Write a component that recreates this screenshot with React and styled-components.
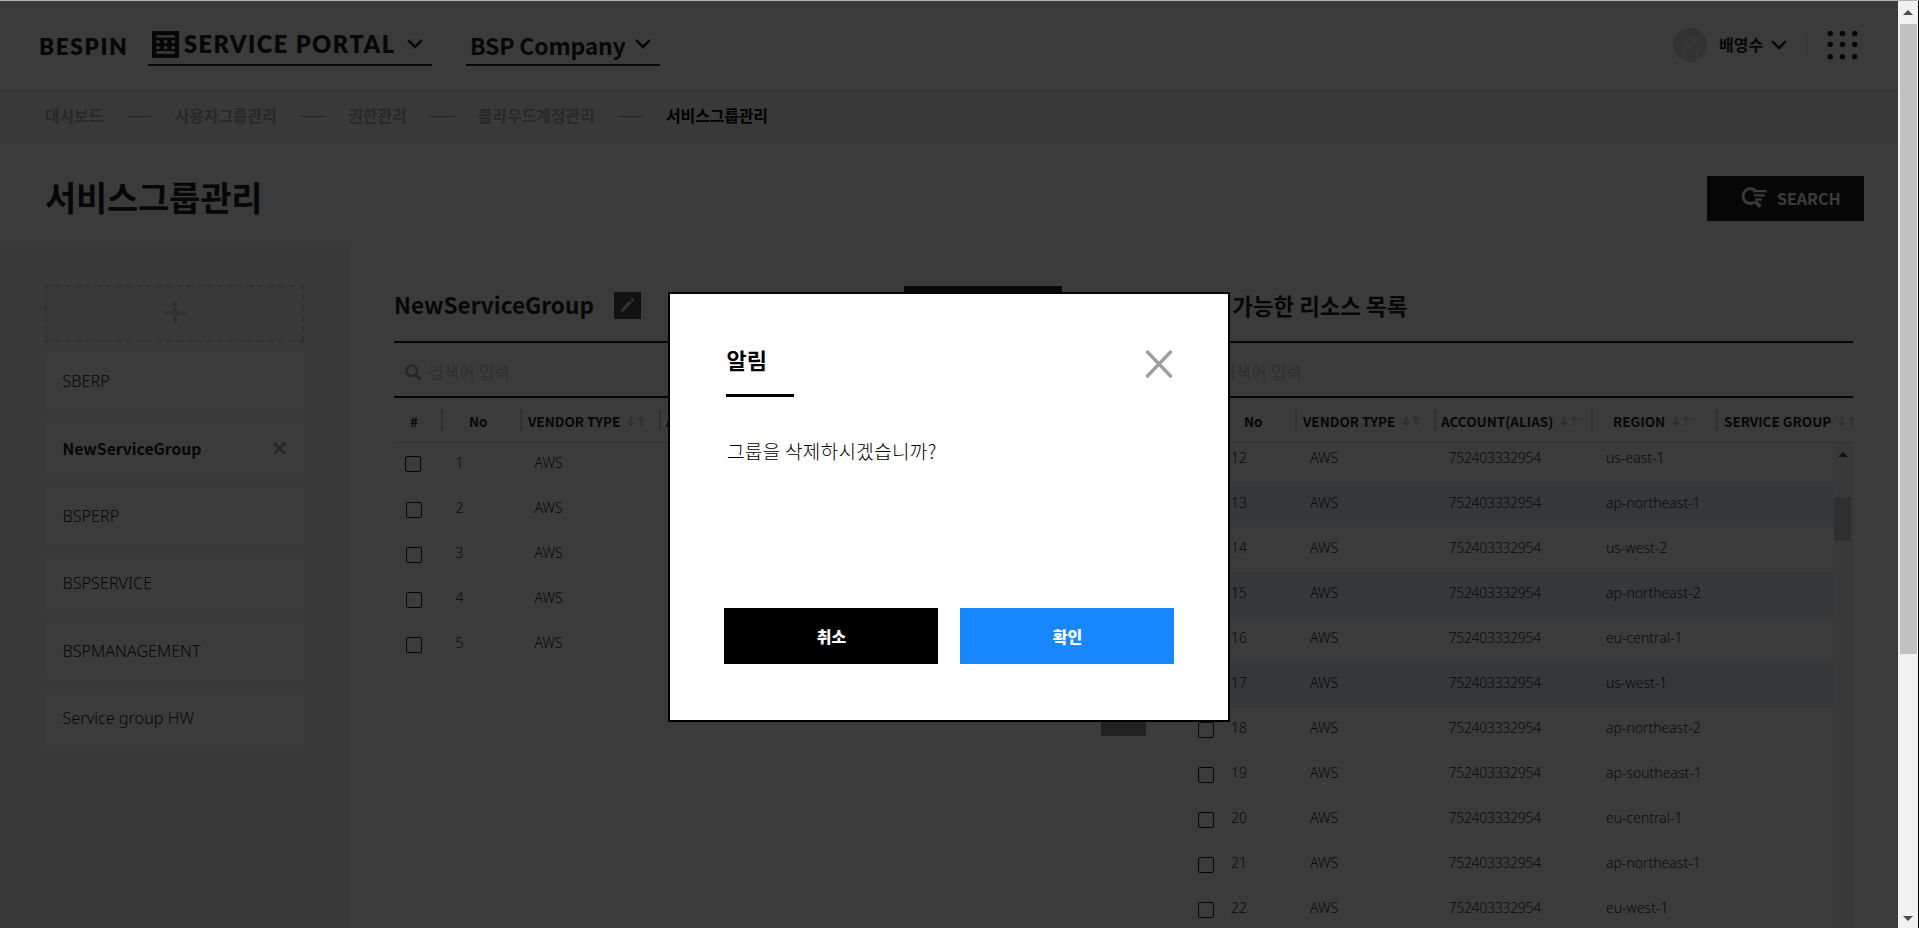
import React from "react";
import styled, { createGlobalStyle } from "styled-components";

const Global = createGlobalStyle`
  * { box-sizing: border-box; }
  html, body { margin: 0; padding: 0; background: #fff; }
  body { font-family: "Noto Sans CJK KR", "Noto Sans", sans-serif; color: #1e1e1e; }
  button { font: inherit; border: 0; padding: 0; margin: 0; }
`;

const sans = `"Noto Sans", "Noto Sans CJK KR", sans-serif`;

const Window = styled.div`
  position: relative;
  width: 1919px;
  height: 928px;
  overflow: hidden;
  display: grid;
  grid-template-columns: 1898px 21px;
  grid-template-rows: 1px 927px;
`;
const TopEdge = styled.div`
  grid-column: 1 / 3;
  background: #b4b4b4;
`;
const Page = styled.div`
  position: relative;
  display: flex;
  flex-direction: column;
  overflow: hidden;
  background: #fff;
`;

/* header */
const Header = styled.header`
  display: flex;
  align-items: flex-start;
  height: 90px;
  flex: none;
  border-bottom: 1px solid #d0d0d0;
  padding: 0 40px 0 39px;
`;
const Brand = styled.div`
  font: 800 22.5px/30px Lato, sans-serif;
  letter-spacing: 1.7px;
  padding-top: 31px;
  width: 109px;
  white-space: nowrap;
`;
const Picker = styled.div`
  display: flex;
  align-items: center;
  height: 65px;
  width: ${(p) => p.$w}px;
  margin-right: 34px;
  padding: ${(p) => p.$pad};
  border-bottom: 2px solid #1e1e1e;
  white-space: nowrap;
`;
const PortalName = styled.span`
  font: 800 23.5px/30px Lato, sans-serif;
  letter-spacing: 1.5px;
  width: 223px;
  margin-left: 5px;
`;
const CompanyName = styled.span`
  font: 700 23px/30px "Noto Sans CJK KR", sans-serif;
  letter-spacing: -0.2px;
  width: 165px;
  margin-top: 2px;
`;
const HeaderRight = styled.div`
  display: flex;
  align-items: center;
  margin-left: auto;
  height: 88px;
`;
const UserName = styled.span`
  font-size: 16px;
  font-weight: 700;
  line-height: 24px;
  width: 52px;
  margin: -2px 0 0 12px;
`;
const Divider = styled.i`
  width: 1px;
  height: 22px;
  background: #d0d0d0;
  margin: 0 20px 0 19px;
`;

/* breadcrumb */
const Crumbs = styled.nav`
  display: flex;
  align-items: center;
  flex: none;
  height: 53px;
  padding: 0 0 5px 45px;
  background: #f4f4f4;
  font-size: 16px;
  letter-spacing: -0.17px;
`;
const Crumb = styled.span`
  font-weight: 700;
  line-height: 24px;
  white-space: nowrap;
  color: ${(p) => (p.$on ? "#000" : "#b0b0b0")};
`;
const Dash = styled.i`
  width: 24.6px;
  height: 1px;
  margin: 2px 23.5px 0 23.500px;
  background: #9c9c9c;
`;

/* title */
const TitleBar = styled.div`
  display: flex;
  flex: none;
  justify-content: space-between;
  align-items: flex-start;
  height: 102px;
  padding: 32px 34px 0 45px;
  border-bottom: 1px solid #f6f6f6;
`;
const Title = styled.h1`
  margin: -1px 0 0;
  font-size: 34px;
  line-height: 44px;
  font-weight: 700;
  letter-spacing: -0.25px;
`;
const SearchButton = styled.button`
  display: flex;
  align-items: center;
  width: 157px;
  height: 45px;
  padding: 0 0 2px 34px;
  gap: 10px;
  background: #1e1e1e;
  color: #fff;
  font-size: 16px;
  font-weight: 700;
`;

const Body = styled.div`
  display: flex;
  flex: 1;
  min-height: 0;
`;
const Sidebar = styled.aside`
  width: 349px;
  flex: none;
  background: #f4f4f4;
  padding: 39px 45px 0;
  display: flex;
  flex-direction: column;
  gap: 11px;
`;
const AddGroup = styled.div`
  height: 56.5px;
  flex: none;
  border: 2px dashed #d4d4d4;
  display: flex;
  align-items: center;
  justify-content: center;
`;
const GroupItem = styled.div`
  display: flex;
  flex: none;
  align-items: center;
  justify-content: space-between;
  height: 56.5px;
  padding: 0 18px 0 17.5px;
  background: #fff;
  font-family: ${(p) => (p.$on ? '"Noto Sans CJK KR", sans-serif' : sans)};
  font-size: ${(p) => (p.$on ? 15.7 : 16.2)}px;
  font-weight: ${(p) => (p.$on ? 700 : 300)};
`;

const Main = styled.main`
  flex: 1;
  display: flex;
  padding: 39px 45px 0;
`;
const Panel = styled.section`
  width: 667px;
  display: flex;
  flex-direction: column;
`;
const PanelHead = styled.div`
  display: flex;
  align-items: center;
  position: relative;
  height: 56px;
  padding-bottom: 19px;
`;
const PanelTitle = styled.h2`
  margin: ${(p) => p.$top || 0}px 0 0;
  font-size: ${(p) => p.$size}px;
  font-weight: 700;
  line-height: 32px;
  white-space: nowrap;
`;
const EditBox = styled.span`
  display: flex;
  align-items: center;
  justify-content: center;
  width: 27px;
  height: 27px;
  margin: 3px 0 0 20px;
  background: #4d4d4d;
`;
const ActionButton = styled.button`
  width: 158px;
  height: 45px;
  margin: 9px -1px 0 auto;
  background: #1e1e1e;
`;
const SearchField = styled.div`
  display: flex;
  align-items: center;
  height: 57px;
  padding-left: 11px;
  border-top: 2px solid #1e1e1e;
  border-bottom: 2px solid #1e1e1e;
`;
const Placeholder = styled.span`
  margin: 4px 0 0 6px;
  font-size: 17px;
  line-height: 24px;
  color: #cfcfcf;
`;
const HeadRow = styled.div`
  display: flex;
  align-items: center;
  height: 44px;
  overflow: hidden;
  flex: none;
`;
const HeadCell = styled.div`
  display: flex;
  flex: none;
  align-items: center;
  gap: 7px;
  width: ${(p) => p.$w}px;
  height: 22px;
  padding: 1px 0 0 ${(p) => p.$pl}px;
  border-right: 2px solid #d9d9d9;
  font-size: 13.5px;
  font-weight: 700;
  white-space: nowrap;
`;
const Rows = styled.div`
  position: relative;
  flex: 1;
  min-height: 0;
  display: flex;
  border-top: 1px solid #cdcdcd;
  overflow: hidden;
`;
const RowList = styled.div`
  flex: 1;
  display: flex;
  flex-direction: column;
  margin-top: ${(p) => p.$shift}px;
`;
const Row = styled.div`
  display: flex;
  flex: none;
  height: 45px;
  border-top: 1px solid ${(p) => (p.$on ? "#deeffb" : "#f4f4f4")};
  background: ${(p) => (p.$on ? "#deeffb" : "#fff")};
`;
const CheckCell = styled.div`
  width: ${(p) => p.$w}px;
  flex: none;
  padding: ${(p) => (p.$first ? "13px 0 0 11px" : "14px 0 0 12px")};
`;
const Check = styled.i`
  display: block;
  width: 16px;
  height: 16px;
  border: 1px solid #1a1a1a;
  border-radius: 2px;
`;
const Cell = styled.div`
  width: ${(p) => p.$w}px;
  flex: none;
  padding-left: ${(p) => p.$pl}px;
  font: 300 14px/40px ${sans};
  letter-spacing: ${(p) => p.$ls || 0}px;
  color: #333;
  white-space: nowrap;
`;
const InnerTrack = styled.div`
  width: 20px;
  flex: none;
  background: #f4f4f4;
  display: flex;
  flex-direction: column;
  align-items: flex-start;
  padding: 9px 0 0 1px;
  gap: 40px;
`;
const InnerThumb = styled.i`
  width: 17px;
  height: 44px;
  background: #cbcbcb;
`;
const Arrow = styled.i`
  width: 0;
  height: 0;
  margin-left: ${(p) => p.$ml || 0}px;
  border: 5px solid transparent;
  ${(p) => (p.$down ? "border-bottom-width:0;" : "border-top-width:0;")}
  border-${(p) => (p.$down ? "top" : "bottom")}-color: ${(p) => p.$c};
`;
const Middle = styled.div`
  width: 125px;
  flex: none;
  display: flex;
  justify-content: center;
  align-items: flex-start;
  padding-top: 406px;
`;
const MoveButton = styled.div`
  width: 45px;
  height: 45px;
  background: #919191;
  display: flex;
  justify-content: center;
`;

/* window scrollbar */
const ScrollBar = styled.div`
  background: #f1f1f1;
  border-right: 1px solid #000;
  display: flex;
  flex-direction: column;
  align-items: center;
  padding: 9px 0 7px;
`;
const Thumb = styled.div`
  width: 17px;
  height: 630px;
  margin: 9px 0 auto 1px;
  background: #c1c1c1;
`;

/* dialog */
const Shade = styled.div`
  position: absolute;
  inset: 0;
  background: rgba(0, 0, 0, 0.77);
`;
const Dialog = styled.div`
  position: absolute;
  left: 668px;
  top: 292px;
  width: 562px;
  height: 430px;
  display: flex;
  flex-direction: column;
  background: #fff;
  border: 2px solid #000;
  padding: 48px 54px 56px;
  color: #000;
`;
const DialogHead = styled.div`
  display: flex;
  justify-content: space-between;
  align-items: flex-start;
  height: 57px;
  padding: 0 1px 0 2px;
`;
const DialogTitle = styled.div`
  width: 68px;
  height: 55px;
  padding-left: 0.5px;
  border-bottom: 3px solid #000;
  font-size: 22px;
  font-weight: 700;
  line-height: 35px;
`;
const CloseIcon = styled.svg`
  width: 28px;
  height: 28px;
  margin-top: 8px;
`;
const Message = styled.p`
  margin: 37px 0 0 3px;
  font-size: 19px;
  font-weight: 300;
  line-height: 30px;
  letter-spacing: 0.35px;
`;
const DialogActions = styled.div`
  display: flex;
  justify-content: space-between;
  margin-top: auto;
`;
const DialogButton = styled.button`
  width: 214px;
  height: 56px;
  padding: 0 0 1px 1px;
  background: ${(p) => (p.$primary ? "#1886ff" : "#000")};
  color: #fff;
  font-size: 16px;
  font-weight: 900;
`;

const Chevron = () => (
  <svg width="16" height="10" viewBox="0 0 16 10" fill="none" stroke="#1e1e1e" strokeWidth="2.5">
    <path d="M1.2 1.2 8 8l6.8-6.8" />
  </svg>
);

const SortArrows = () => (
  <svg width="18" height="12" viewBox="0 0 18 12" fill="none" stroke="#c9c9c9" strokeWidth="1.6">
    <path d="M4 1v9M.8 7 4 10.4 7.2 7M14 11V2M10.8 5 14 1.6 17.2 5" />
  </svg>
);

const MagnifierIcon = styled.svg`
  width: 17px;
  height: 17px;
  margin-top: 5px;
`;
const Magnifier = () => (
  <MagnifierIcon viewBox="0 0 17 17" fill="none" stroke="#a3a3a3">
    <circle cx="6.8" cy="6.8" r="5.4" strokeWidth="2.2" />
    <path d="m10.8 10.8 5 4.6" strokeWidth="2.8" />
  </MagnifierIcon>
);

const crumbs = ["대시보드", "사용자그룹관리", "권한관리", "클라우드계정관리", "서비스그룹관리"];
const groups = ["SBERP", "NewServiceGroup", "BSPERP", "BSPSERVICE", "BSPMANAGEMENT", "Service group HW"];
const resources = [
  [12, "us-east-1"],
  [13, "ap-northeast-1"],
  [14, "us-west-2"],
  [15, "ap-northeast-2"],
  [16, "eu-central-1"],
  [17, "us-west-1"],
  [18, "ap-northeast-2"],
  [19, "ap-southeast-1"],
  [20, "eu-central-1"],
  [21, "ap-northeast-1"],
  [22, "eu-west-1"],
];
const picked = [13, 15, 17];

const columns = (first) => [
  { label: "#", w: first, pl: first === 49 ? 16 : 8 },
  { label: "No", w: 79, pl: 26 },
  { label: "VENDOR TYPE", w: 139, pl: 6, sort: true },
  { label: "ACCOUNT(ALIAS)", w: 157, pl: 5, sort: true },
  { label: "REGION", w: 125, pl: 20, sort: true },
  { label: "SERVICE GROUP", w: 140, pl: 6, sort: true },
];

const TableHead = ({ first }) => (
  <HeadRow>
    {columns(first).map((c) => (
      <HeadCell key={c.label} $w={c.w} $pl={c.pl}>
        {c.label}
        {c.sort && <SortArrows />}
      </HeadCell>
    ))}
  </HeadRow>
);

export default function App() {
  return (
    <Window>
      <Global />
      <TopEdge />
      <Page>
        <Header>
          <Brand>BESPIN</Brand>
          <Picker $w={284} $pad="23px 0 0 4px">
            <svg width="27" height="27" viewBox="0 0 27 27">
              <rect width="27" height="27" fill="#1e1e1e" />
              <path d="M4.5 5.4h18.2M4.5 21.5h18.2" stroke="#fff" strokeWidth="2.4" />
              {[10.8, 16.7].map((y) =>
                [6, 13.6, 21.2].map((x) => (
                  <rect key={x + "-" + y} x={x - 1.6} y={y - 1.5} width="3.2" height="3" rx="1" fill="#fff" />
                ))
              )}
            </svg>
            <PortalName>SERVICE PORTAL</PortalName>
            <Chevron />
          </Picker>
          <Picker $w={194} $pad="23px 0 0 4px">
            <CompanyName>BSP Company</CompanyName>
            <Chevron />
          </Picker>
          <HeaderRight>
            <svg width="34" height="34" viewBox="0 0 34 34">
              <circle cx="17" cy="17" r="17" fill="#dcdcdc" />
              <g fill="none" stroke="#f6f6f6" strokeWidth="1.5">
                <circle cx="17" cy="14" r="4" />
                <path d="M9.5 32v-5a7.5 7.5 0 0 1 15 0v5" />
              </g>
            </svg>
            <UserName>배영수</UserName>
            <Chevron />
            <Divider />
            <svg width="31" height="30" viewBox="0 0 31 30" fill="#1e1e1e">
              {[3.5, 14.5, 26.8].map((y) => [3.2, 15.5, 27.7].map((x) => <circle key={x + "-" + y} cx={x} cy={y} r="2.7" />))}
            </svg>
          </HeaderRight>
        </Header>

        <Crumbs>
          {crumbs.map((c, i) => (
            <React.Fragment key={c}>
              {i > 0 && <Dash />}
              <Crumb $on={i === 4}>{c}</Crumb>
            </React.Fragment>
          ))}
        </Crumbs>

        <TitleBar>
          <Title>서비스그룹관리</Title>
          <SearchButton>
            <svg width="26" height="22" viewBox="0 0 26 22" fill="none" stroke="#fff" strokeWidth="2.8">
              <path d="M14.8 4A7.4 7.4 0 1 0 13.6 15.2" />
              <path d="m14 14.5 5.4 5.2" strokeWidth="3.6" />
              <path d="M12 4.2h13.5M13 8.4h10.6M14 12.6h7" strokeWidth="2.2" />
            </svg>
            SEARCH
          </SearchButton>
        </TitleBar>

        <Body>
          <Sidebar>
            <AddGroup>
              <svg width="22" height="22" viewBox="0 0 22 22" stroke="#d4d4d4" strokeWidth="4">
                <path d="M11 0v22M0 11h22" />
              </svg>
            </AddGroup>
            {groups.map((g, i) => (
              <GroupItem key={g} $on={i === 1}>
                {g}
                {i === 1 && (
                  <svg width="13" height="13" viewBox="0 0 13 13" stroke="#a8a8a8" strokeWidth="2.6">
                    <path d="m1 1 11 11M12 1 1 12" />
                  </svg>
                )}
              </GroupItem>
            ))}
          </Sidebar>

          <Main>
            <Panel>
              <PanelHead>
                <PanelTitle $size={22.6} $top={2}>NewServiceGroup</PanelTitle>
                <EditBox>
                  <svg width="15" height="16" viewBox="0 0 15 16" fill="#d8d8d8">
                    <path d="m9.4 3.4 2.6 2.4-7.6 8L.6 15.4l1.4-4zM10.4 2.3 12 .6l2.6 2.4L13 4.7z" />
                  </svg>
                </EditBox>
                <ActionButton />
              </PanelHead>
              <SearchField>
                <Magnifier />
                <Placeholder>검색어 입력</Placeholder>
              </SearchField>
              <TableHead first={49} />
              <Rows>
                <RowList $shift={-1}>
                  {[1, 2, 3, 4, 5].map((n) => (
                    <Row key={n}>
                      <CheckCell $w={49} $first={n === 1}>
                        <Check />
                      </CheckCell>
                      <Cell $w={79} $pl={12.5}>{n}</Cell>
                      <Cell $w={139} $pl={12.5}>AWS</Cell>
                    </Row>
                  ))}
                  <Row />
                </RowList>
              </Rows>
            </Panel>

            <Middle>
              <MoveButton>
                <svg width="20" height="32" viewBox="0 0 20 32" fill="none" stroke="#fff" strokeWidth="3" strokeLinecap="round">
                  <path d="M3 22 10 29 17 22M10 28V10" />
                </svg>
              </MoveButton>
            </Middle>

            <Panel>
              <PanelHead>
                <PanelTitle $size={22.4} $top={3}>추가 가능한 리소스 목록</PanelTitle>
              </PanelHead>
              <SearchField>
                <Magnifier />
                <Placeholder>검색어 입력</Placeholder>
              </SearchField>
              <TableHead first={32} />
              <Rows>
                <RowList $shift={-6}>
                  {resources.map(([n, region]) => (
                    <Row key={n} $on={picked.includes(n)}>
                      <CheckCell $w={32}>
                        <Check />
                      </CheckCell>
                      <Cell $w={79} $pl={13}>{n}</Cell>
                      <Cell $w={139} $pl={13}>AWS</Cell>
                      <Cell $w={157} $pl={12.5} $ls={-0.3}>752403332954</Cell>
                      <Cell $w={125} $pl={13}>{region}</Cell>
                    </Row>
                  ))}
                </RowList>
                <InnerTrack>
                  <Arrow $ml={4} $c="#505050" />
                  <InnerThumb />
                </InnerTrack>
              </Rows>
            </Panel>
          </Main>
        </Body>
        <Shade />
      </Page>

      <ScrollBar>
        <Arrow $c="#505050" />
        <Thumb />
        <Arrow $down $c="#505050" />
      </ScrollBar>

      <Dialog>
        <DialogHead>
          <DialogTitle>알림</DialogTitle>
          <CloseIcon viewBox="0 0 28 28" stroke="#9e9e9e" strokeWidth="3.4" strokeLinecap="round">
            <path d="M2.5 2l23 24M25.5 2l-23 24" />
          </CloseIcon>
        </DialogHead>
        <Message>그룹을 삭제하시겠습니까?</Message>
        <DialogActions>
          <DialogButton>취소</DialogButton>
          <DialogButton $primary>확인</DialogButton>
        </DialogActions>
      </Dialog>
    </Window>
  );
}
